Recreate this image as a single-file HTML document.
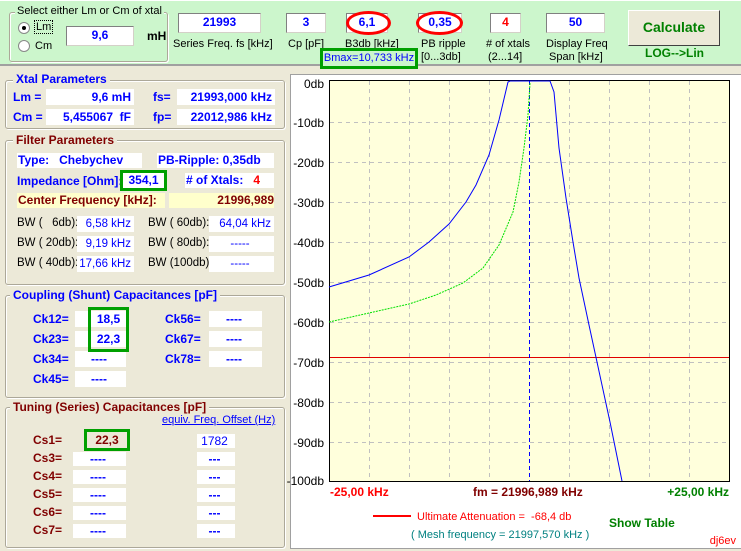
<!DOCTYPE html>
<html><head><meta charset="utf-8"><style>
*{margin:0;padding:0;box-sizing:border-box}
body{width:741px;height:551px;background:#ece9d8;font-family:"Liberation Sans",sans-serif;font-size:11px;position:relative;overflow:hidden}
.a{position:absolute;white-space:nowrap}
.b{font-weight:bold}
.in{position:absolute;background:#fff;border:1px solid #808080;border-right-color:#d4d0c8;border-bottom-color:#d4d0c8;text-align:center;font-weight:bold;color:#0000ff;font-size:12px;line-height:17px}
.grp{position:absolute;border:1px solid #aca899;border-radius:3px;box-shadow:1px 1px 0 #fff inset,1px 1px 0 #fff}
.gt{position:absolute;background:#ece9d8;padding:0 3px;font-weight:bold;font-size:12px}
.blue{color:#0000ff}.dred{color:#800000}
.wb{position:absolute;white-space:nowrap;overflow:hidden;background:#fff;text-align:right;padding-right:3px;color:#0000ff;font-size:12px;line-height:16px;height:16px}
.h14{height:14px;line-height:14px}
.bw{font-size:11.5px}
</style></head><body>
<div class="a" style="left:0;top:0;width:741px;height:66px;background:#ccf6cc;border-bottom:2px solid #a0a0a0;border-top:1px solid #fff"></div>
<div class="grp" style="left:9px;top:12px;width:159px;height:50px"></div>
<div class="a" style="left:15px;top:5px;background:#ccf6cc;padding:0 2px;font-size:11px">Select either Lm or Cm of xtal</div>
<div class="a" style="left:18px;top:22px;width:12px;height:12px;border-radius:50%;background:#fff;border:1px solid #888"></div>
<div class="a" style="left:22px;top:26px;width:4px;height:4px;border-radius:50%;background:#000"></div>
<div class="a" style="left:34px;top:20px;border:1px dotted #000;padding:0 1px;font-size:11px">Lm</div>
<div class="a" style="left:18px;top:40px;width:12px;height:12px;border-radius:50%;background:#fff;border:1px solid #888"></div>
<div class="a" style="left:35px;top:40px">Cm</div>
<div class="in" style="left:66px;top:26px;width:68px;height:20px">9,6</div>
<div class="a b" style="left:147px;top:29px;font-size:12px">mH</div>
<div class="in" style="left:178px;top:13px;width:83px;height:20px">21993</div>
<div class="a" style="left:173px;top:38px">Series Freq. fs [kHz]</div>
<div class="in" style="left:286px;top:13px;width:40px;height:20px">3</div>
<div class="a" style="left:288px;top:38px">Cp [pF]</div>
<div class="in" style="left:346px;top:13px;width:42px;height:20px">6,1</div>
<div class="a" style="left:346px;top:11px;width:45px;height:24px;border:3px solid #f00;border-radius:50%"></div>
<div class="a" style="left:345px;top:38px">B3db [kHz]</div>
<div class="in" style="left:418px;top:13px;width:44px;height:20px">0,35</div>
<div class="a" style="left:416px;top:11px;width:47px;height:24px;border:3px solid #f00;border-radius:50%"></div>
<div class="a" style="left:421px;top:38px">PB ripple</div>
<div class="a" style="left:421px;top:51px">[0...3db]</div>
<div class="in" style="left:490px;top:13px;width:31px;height:20px;color:#f00">4</div>
<div class="a" style="left:486px;top:38px"># of xtals</div>
<div class="a" style="left:488px;top:51px">(2...14]</div>
<div class="in" style="left:546px;top:13px;width:59px;height:20px">50</div>
<div class="a" style="left:546px;top:38px">Display Freq</div>
<div class="a" style="left:549px;top:51px">Span [kHz]</div>
<div class="a b" style="left:628px;top:10px;width:92px;height:36px;background:#ece9d8;border:1px solid #fff;border-right-color:#404040;border-bottom-color:#404040;color:#008000;font-size:14px;text-align:center;line-height:33px">Calculate</div>
<div class="a b" style="left:645px;top:46px;color:#008000;font-size:12px">LOG--&gt;Lin</div>
<div class="a blue" style="left:320px;top:48px;width:98px;height:21px;border:3px solid #00a000;background:#ccf6cc;text-align:center;line-height:15px">Bmax=10,733 kHz</div>

<div class="grp" style="left:5px;top:80px;width:280px;height:49px"></div>
<div class="gt blue" style="left:13px;top:72px">Xtal Parameters</div>
<div class="a b blue" style="left:13px;top:90px;font-size:12px">Lm =</div>
<div class="wb b" style="left:46px;top:89px;width:88px">9,6 mH</div>
<div class="a b blue" style="left:153px;top:90px;font-size:12px">fs=</div>
<div class="wb b" style="left:177px;top:89px;width:98px">21993,000 kHz</div>
<div class="a b blue" style="left:13px;top:110px;font-size:12px">Cm =</div>
<div class="wb b" style="left:46px;top:109px;width:88px">5,455067 &nbsp;fF</div>
<div class="a b blue" style="left:153px;top:110px;font-size:12px">fp=</div>
<div class="wb b" style="left:177px;top:109px;width:98px">22012,986 kHz</div>

<div class="grp" style="left:5px;top:140px;width:280px;height:145px"></div>
<div class="gt dred" style="left:13px;top:133px">Filter Parameters</div>
<div class="a b blue" style="left:17px;top:153px;width:125px;height:15px;background:#fff;padding-left:1px;font-size:12px;line-height:15px">Type: &nbsp;&nbsp;Chebychev</div>
<div class="a b blue" style="left:157px;top:153px;width:117px;height:15px;background:#fff;padding-left:1px;font-size:12px;line-height:15px">PB-Ripple: 0,35db</div>
<div class="a b blue" style="left:17px;top:174px;font-size:12px">Impedance [Ohm]:</div>
<div class="a b blue" style="left:120px;top:170px;width:47px;height:21px;border:3px solid #00a000;background:#fff;text-align:center;line-height:15px;font-size:12px">354,1</div>
<div class="a b blue" style="left:185px;top:173px;width:89px;height:15px;background:#fff;padding-left:1px;font-size:12px;line-height:15px"># of Xtals: &nbsp;&nbsp;<span style="color:#f00">4</span></div>
<div class="a b dred" style="left:17px;top:193px;width:148px;height:15px;background:#ffffcc;padding-left:1px;font-size:12px;line-height:15px">Center Frequency [kHz]:</div>
<div class="a b dred" style="left:169px;top:193px;width:105px;height:15px;background:#ffffcc;text-align:right;font-size:12px;line-height:15px">21996,989</div>
<div class="a bw" style="left:17px;top:217px">BW ( &nbsp;&nbsp;6db):</div>
<div class="wb bw" style="left:77px;top:216px;width:57px">6,58 kHz</div>
<div class="a bw" style="left:148px;top:217px">BW ( 60db):</div>
<div class="wb bw" style="left:209px;top:216px;width:65px">64,04 kHz</div>
<div class="a bw" style="left:17px;top:237px">BW ( 20db):</div>
<div class="wb bw" style="left:77px;top:236px;width:57px">9,19 kHz</div>
<div class="a bw" style="left:148px;top:237px">BW ( 80db):</div>
<div class="wb bw" style="left:209px;top:236px;width:65px;text-align:center">-----</div>
<div class="a bw" style="left:17px;top:257px">BW ( 40db):</div>
<div class="wb bw" style="left:77px;top:256px;width:57px">17,66 kHz</div>
<div class="a bw" style="left:148px;top:257px">BW (100db):</div>
<div class="wb bw" style="left:209px;top:256px;width:65px;text-align:center">-----</div>

<div class="grp" style="left:5px;top:295px;width:280px;height:103px"></div>
<div class="gt blue" style="left:10px;top:288px">Coupling (Shunt) Capacitances [pF]</div>
<div class="a b blue" style="left:33px;top:312px;font-size:12px">Ck12=</div>
<div class="a b blue" style="left:33px;top:332px;font-size:12px">Ck23=</div>
<div class="a b blue" style="left:33px;top:352px;font-size:12px">Ck34=</div>
<div class="a b blue" style="left:33px;top:372px;font-size:12px">Ck45=</div>
<div class="wb" style="left:75px;top:311px;width:51px"></div>
<div class="wb" style="left:75px;top:331px;width:51px"></div>
<div class="wb b" style="left:75px;top:351px;width:51px;text-align:center">----</div>
<div class="wb b" style="left:75px;top:371px;width:51px;text-align:center">----</div>
<div class="a" style="left:88px;top:307px;width:41px;height:45px;border:3px solid #00a000"></div>
<div class="a b blue" style="left:91px;top:312px;width:35px;text-align:center;font-size:12px">18,5</div>
<div class="a b blue" style="left:91px;top:332px;width:35px;text-align:center;font-size:12px">22,3</div>
<div class="a b blue" style="left:165px;top:312px;font-size:12px">Ck56=</div>
<div class="a b blue" style="left:165px;top:332px;font-size:12px">Ck67=</div>
<div class="a b blue" style="left:165px;top:352px;font-size:12px">Ck78=</div>
<div class="wb b" style="left:209px;top:311px;width:53px;text-align:center">----</div>
<div class="wb b" style="left:209px;top:331px;width:53px;text-align:center">----</div>
<div class="wb b" style="left:209px;top:351px;width:53px;text-align:center">----</div>

<div class="grp" style="left:5px;top:407px;width:280px;height:141px"></div>
<div class="gt dred" style="left:10px;top:400px">Tuning (Series) Capacitances [pF]</div>
<div class="a blue" style="left:162px;top:414px;text-decoration:underline">equiv. Freq. Offset (Hz)</div>
<div class="a" style="left:84px;top:429px;width:46px;height:22px;border:3px solid #00a000"></div>
<div class="a b dred" style="left:87px;top:433px;width:40px;text-align:center;font-size:12px">22,3</div>
<div class="wb h14" style="left:197px;top:434px;width:38px;text-align:center">1782</div>
<div class="a b dred" style="left:33px;top:433px;font-size:12px">Cs1=</div>
<div class="a b dred" style="left:33px;top:451px;font-size:12px">Cs3=</div>
<div class="a b dred" style="left:33px;top:469px;font-size:12px">Cs4=</div>
<div class="a b dred" style="left:33px;top:487px;font-size:12px">Cs5=</div>
<div class="a b dred" style="left:33px;top:505px;font-size:12px">Cs6=</div>
<div class="a b dred" style="left:33px;top:523px;font-size:12px">Cs7=</div>
<div class="wb b h14" style="left:73px;top:452px;width:53px;text-align:center">----</div>
<div class="wb b h14" style="left:73px;top:470px;width:53px;text-align:center">----</div>
<div class="wb b h14" style="left:73px;top:488px;width:53px;text-align:center">----</div>
<div class="wb b h14" style="left:73px;top:506px;width:53px;text-align:center">----</div>
<div class="wb b h14" style="left:73px;top:524px;width:53px;text-align:center">----</div>
<div class="wb b h14" style="left:197px;top:452px;width:38px;text-align:center">---</div>
<div class="wb b h14" style="left:197px;top:470px;width:38px;text-align:center">---</div>
<div class="wb b h14" style="left:197px;top:488px;width:38px;text-align:center">---</div>
<div class="wb b h14" style="left:197px;top:506px;width:38px;text-align:center">---</div>
<div class="wb b h14" style="left:197px;top:524px;width:38px;text-align:center">---</div>

<div class="a" style="left:290px;top:74px;width:451px;height:475px;background:#fff;border:1px solid #a0a0a0;border-right:none"></div>
<svg class="a" style="left:0;top:0" width="741" height="551" viewBox="0 0 741 551">
<rect x="329.5" y="80.5" width="400" height="401" fill="#ffffdc" stroke="#000"/>
<g stroke="#c0c0c0" stroke-dasharray="4,4" fill="none">
<path d="M369.5 81V481M409.5 81V481M449.5 81V481M489.5 81V481M569.5 81V481M609.5 81V481M649.5 81V481M689.5 81V481"/>
<path d="M330 122.5H729M330 162.5H729M330 202.5H729M330 242.5H729M330 282.5H729M330 322.5H729M330 362.5H729M330 402.5H729M330 442.5H729"/>
</g>
<line x1="330" y1="357.5" x2="729" y2="357.5" stroke="#e00000"/>
<line x1="529.5" y1="81" x2="529.5" y2="481" stroke="#0000ff" stroke-dasharray="4,3"/>
<polyline fill="none" stroke="#00e000" stroke-dasharray="2,1" points="329,322 369,313 409,304 436,295 463,283 483,268 499,245 513,212 519,182 524,148 528,115 530,83"/>
<polyline fill="none" stroke="#0000ff" points="329,287 369,275 409,257 429,242 449,224 466,202 476,185 489,155 499,120 508,82 510,81 550,81 554,92 559,148 566,198 573,242 579,278 589,325 597,362 610,422 622,481"/>
<g font-family="Liberation Sans" font-size="12" text-anchor="end" fill="#000">
<text x="324" y="88">0db</text><text x="324" y="127">-10db</text><text x="324" y="167">-20db</text><text x="324" y="207">-30db</text><text x="324" y="247">-40db</text><text x="324" y="287">-50db</text><text x="324" y="327">-60db</text><text x="324" y="367">-70db</text><text x="324" y="407">-80db</text><text x="324" y="447">-90db</text><text x="324" y="485">-100db</text>
</g>
<g font-family="Liberation Sans" font-size="12" font-weight="bold">
<text x="330" y="496" fill="#f00">-25,00 kHz</text>
<text x="473" y="496" fill="#800000">fm = 21996,989 kHz</text>
<text x="729" y="496" fill="#008000" text-anchor="end">+25,00 kHz</text>
<text x="609" y="527" fill="#008000">Show Table</text>
</g>
<line x1="373" y1="516" x2="411" y2="516" stroke="#f00" stroke-width="2"/>
<g font-family="Liberation Sans" font-size="11">
<text x="417" y="520" fill="#f00">Ultimate Attenuation = &#160;-68,4 db</text>
<text x="411" y="538" fill="#008080">( Mesh frequency = 21997,570 kHz )</text>
<text x="736" y="544" fill="#f00" text-anchor="end">dj6ev</text>
</g>
</svg>
</body></html>
